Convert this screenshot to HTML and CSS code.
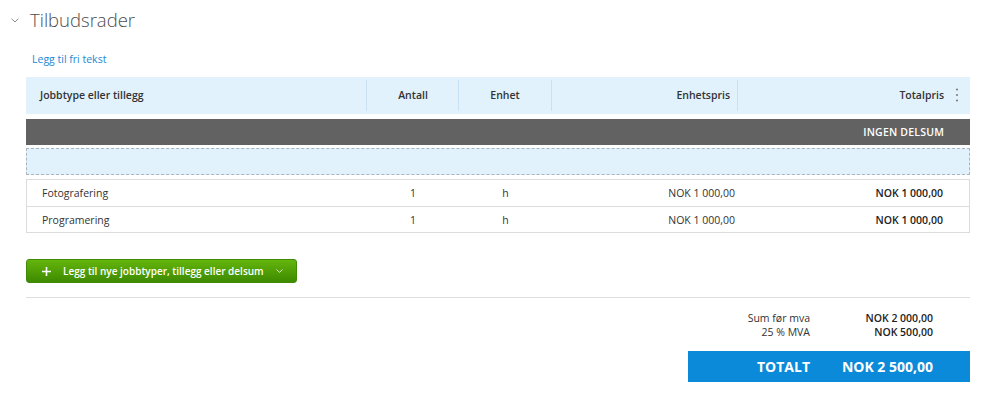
FILE: index.html
```html
<!DOCTYPE html>
<html lang="no">
<head>
<meta charset="utf-8">
<title>Tilbudsrader</title>
<link rel="stylesheet" href="styles.css">
</head>
<body>
<div class="page">
  <div class="title-row">
    <svg class="chev" width="8" height="5" viewBox="0 0 8 5"><path d="M0.6 0.7 L4 4 L7.4 0.7" fill="none" stroke="#8a8a8a" stroke-width="1"/></svg>
    <h1 class="title">Tilbudsrader</h1>
  </div>
  <a class="free-text" href="#">Legg til fri tekst</a>

  <div class="thead">
    <div class="c c1">Jobbtype eller tillegg</div>
    <div class="c c2">Antall</div>
    <div class="c c3">Enhet</div>
    <div class="c c4">Enhetspris</div>
    <div class="c c5">Totalpris
      <svg class="dots" width="4" height="14" viewBox="0 0 4 14"><circle cx="2" cy="1.5" r="1.1" fill="#808080"/><circle cx="2" cy="7" r="1.1" fill="#808080"/><circle cx="2" cy="12.5" r="1.1" fill="#808080"/></svg>
    </div>
  </div>

  <div class="subtotal-bar">INGEN DELSUM</div>
  <div class="dropzone"></div>

  <div class="tbody">
    <div class="tr">
      <div class="c c1">Fotografering</div>
      <div class="c c2">1</div>
      <div class="c c3">h</div>
      <div class="c c4">NOK 1 000,00</div>
      <div class="c c5 b">NOK 1 000,00</div>
    </div>
    <div class="tr">
      <div class="c c1">Programering</div>
      <div class="c c2">1</div>
      <div class="c c3">h</div>
      <div class="c c4">NOK 1 000,00</div>
      <div class="c c5 b">NOK 1 000,00</div>
    </div>
  </div>

  <button class="add-btn" type="button">
    <svg class="plus" width="9" height="9" viewBox="0 0 9 9"><path d="M4.5 0V9M0 4.5H9" stroke="#fff" stroke-width="1.6"/></svg>
    <span class="btn-text">Legg til nye jobbtyper, tillegg eller delsum</span>
    <svg class="btn-chev" width="7" height="4" viewBox="0 0 7 4"><path d="M0.5 0.5 L3.5 3.3 L6.5 0.5" fill="none" stroke="#e6f3d6" stroke-width="0.9"/></svg>
  </button>

  <div class="sep"></div>

  <div class="sums">
    <div class="sum-row"><span class="lbl">Sum før mva</span><span class="val">NOK 2 000,00</span></div>
    <div class="sum-row"><span class="lbl">25 % MVA</span><span class="val">NOK 500,00</span></div>
  </div>

  <div class="total-wrap">
    <div class="total"><span class="lbl">TOTALT</span><span class="val">NOK 2 500,00</span></div>
  </div>
</div>
</body>
</html>
```

FILE: styles.css
```css
* { box-sizing: border-box; }
html, body { margin: 0; padding: 0; background: #fff; }
body {
  font-family: "Open Sans", "Noto Sans", "Liberation Sans", sans-serif;
  font-size: 10.5px;
  color: #333;
}
.page {
  width: 999px;
  padding: 0 29px 0 26px;
}
.title-row {
  display: flex;
  align-items: center;
  height: 40px;
  margin-left: -15px;
}
.chev { margin: 0 11px 0 0; position: relative; top: 0.5px; }
.title {
  margin: 0;
  font-size: 18.5px;
  font-weight: 300;
  color: #4d4d4d;
  line-height: 40px;
}
.free-text {
  display: block;
  margin: 10px 0 0 6px;
  height: 18px;
  line-height: 18px;
  color: #1a89d6;
  text-decoration: none;
  font-size: 10.5px;
  width: max-content;
}
.thead {
  margin-top: 9px;
  height: 37px;
  background: #e1f2fd;
  display: flex;
  align-items: center;
  font-weight: 600;
  color: #333;
}
.c { padding: 0 15px; white-space: nowrap; }
.c1 { width: 340px; padding-left: 14px; }
.c2 { width: 92px; text-align: center; }
.c3 { width: 93px; text-align: center; }
.c4 { width: 186px; text-align: right; padding-right: 7px; }
.c5 { flex: 1; text-align: right; padding-right: 26px; position: relative; }
.thead .c {
  height: 31px;
  line-height: 31px;
}
.thead .c + .c { border-left: 1px solid #c8e1f3; }
.thead .c2 { padding-left: 16px; }
.dots {
  position: absolute;
  right: 11px;
  top: 8px;
}
.subtotal-bar {
  margin-top: 5px;
  height: 26px;
  line-height: 26px;
  background: #626262;
  color: #fff;
  font-weight: 600;
  text-align: right;
  padding-right: 26px;
  letter-spacing: 0.2px;
}
.dropzone {
  margin-top: 3px;
  height: 27px;
  background: #e1f2fd;
  border: 1px dashed #a9b4bd;
}
.tbody {
  margin-top: 4px;
  border: 1px solid #dcdcdc;
}
.tr {
  display: flex;
  align-items: center;
  height: 26px;
  color: #333;
}
.tr + .tr { border-top: 1px solid #dcdcdc; }
.tr .c1 { padding-left: 15px; }
.tr .c4 { padding-right: 3px; }
.tr .c5 { padding-right: 26px; }
.b { font-weight: 600; color: #222; }
.add-btn {
  margin-top: 26px;
  height: 24px;
  width: 271px;
  display: flex;
  align-items: center;
  padding: 0 0 0 15px;
  border: 1px solid #3f8a06;
  border-radius: 3px;
  background: linear-gradient(#64b50d, #3e8a00);
  color: #fff;
  font-family: inherit;
  font-size: 10px;
  font-weight: 600;
  cursor: pointer;
}
.btn-text { white-space: nowrap; }
.plus { margin-right: 12px; flex: none; }
.btn-chev { margin-left: 12px; flex: none; }
.sep {
  margin-top: 14px;
  height: 1px;
  background: #dedede;
}
.sums {
  margin-top: 13px;
  display: flex;
  flex-direction: column;
}
.sum-row {
  display: flex;
  justify-content: flex-end;
  line-height: 14px;
  height: 14px;
  padding-right: 37px;
}
.sum-row .lbl { width: 120px; text-align: right; color: #333; }
.sum-row .val { width: 123px; text-align: right; font-weight: 600; color: #222; }
.total-wrap {
  margin-top: 12px;
  display: flex;
  justify-content: flex-end;
}
.total {
  width: 282px;
  height: 31px;
  background: #0b8ad9;
  color: #fff;
  font-size: 14px;
  font-weight: 700;
  display: flex;
  align-items: center;
  justify-content: flex-end;
  padding-right: 37px;
}
.total .lbl { text-align: right; }
.total .val { width: 123px; text-align: right; }
```
